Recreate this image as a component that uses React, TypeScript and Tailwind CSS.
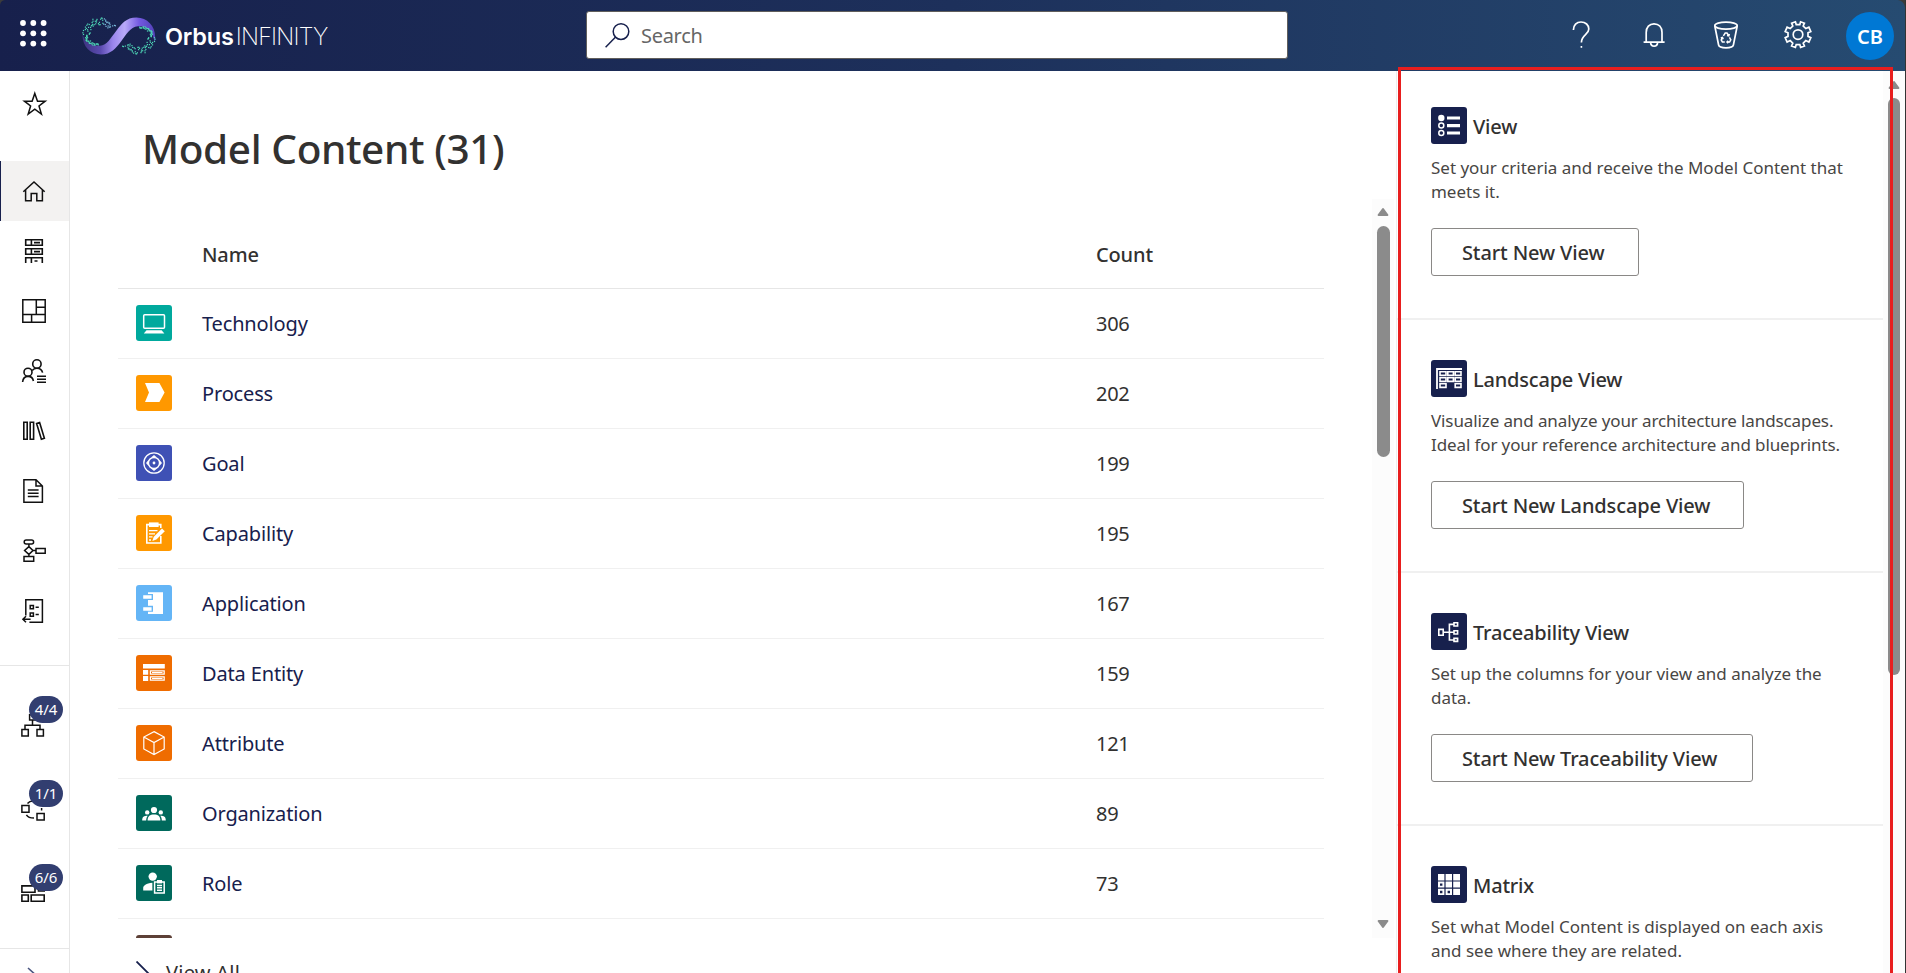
import React from 'react';

const FONT = "font-['Noto_Sans','Open_Sans',sans-serif]";

function LauncherIcon() {
  const at = [3, 13.3, 23.6];
  return (
    <svg width="27" height="27" viewBox="0 0 27 27" fill="#fff">
      {at.map((y) => at.map((x) => <circle key={`${x}-${y}`} cx={x} cy={y} r="2.9" />))}
    </svg>
  );
}

function noise(n: number) {
  const v = Math.sin(n * 127.1 + 11.7) * 43758.5453;
  return v - Math.floor(v);
}

function Logo() {
  const dots: { x: number; y: number; c: string }[] = [];
  for (let i = 0; i < 90; i++) {
    const t = Math.PI * (0.55 + (i / 90) * 1.28);
    const low = Math.sin(t) > 0;
    const r = low ? 14.5 - noise(i * 3 + 1) * 3 : 18 - noise(i * 3 + 1) * 7.5;
    const x = 18.5 + Math.cos(t) * (low ? r + 1.5 : r);
    const y = 18.5 + Math.sin(t) * (low ? r - 3 : r);
    dots.push({ x, y, c: x > 21 ? '#7cc0e0' : '#4fd8b8' });
    dots.push({ x: 74 - x, y: 38 - y, c: '#4fd8b8' });
  }
  return (
    <svg width="74" height="38" viewBox="0 0 74 38">
      <defs>
        <linearGradient id="ribbon" x1="0" y1="0" x2="1" y2="0">
          <stop offset="0" stopColor="#3c3480" />
          <stop offset="0.25" stopColor="#5b4bb0" />
          <stop offset="0.42" stopColor="#9a86ec" />
          <stop offset="0.58" stopColor="#b9aaf8" />
          <stop offset="0.78" stopColor="#7359e0" />
          <stop offset="1" stopColor="#5240b8" />
        </linearGradient>
      </defs>
      <path
        d="M0.5 17 C0 29 8 37.5 19 37.5 C29 37.5 34 31 39 24.5 C44 18 48 10 56 9.2 C65 8.4 71 15 72.6 25 C75.5 12 67 0.5 54.5 0.5 C44 0.5 39.5 7 34.5 13.5 C29 20.5 25 28.6 18 28.8 C9 29 2.5 25 0.5 17 Z"
        fill="url(#ribbon)"
      />
      {dots.map((d, i) => (
        <rect key={i} x={d.x - 0.6} y={d.y - 0.6} width="1.2" height="1.2" fill={d.c} />
      ))}
    </svg>
  );
}

const railSvg = {
  width: 24,
  height: 24,
  viewBox: '0 0 24 24',
  fill: 'none',
  stroke: '#111',
  strokeWidth: 1.5,
  className: 'block overflow-visible',
};

const StarIcon = () => (
  <svg {...railSvg} strokeWidth={1.5}>
    <path d="M12.8 1.4 L15.5 9.2 H23.2 L17 14 L19.4 22 L12.8 17.2 L6.2 22 L8.6 14 L2.4 9.2 H10.1 Z" />
  </svg>
);
const HomeIcon = () => (
  <svg {...railSvg}>
    <path d="M1.3 12.8 L12 2.9 L22.7 12.8 M3.6 11 V21.7 H9.2 V14.6 H14.8 V21.7 H20.4 V11" />
  </svg>
);
const RackIcon = () => (
  <svg {...railSvg} strokeWidth={1.6}>
    <path d="M3.7 0.8 H20.3 V6.2 H3.7 Z M9.4 0.8 V6.2 M3.7 9.8 H20.3 V15.2 H3.7 Z M9.4 9.8 V15.2 M3.7 24 V18.8 H20.3 V24 M9.4 18.8 V24 M12 3.6 H18 M12 12.6 H18 M12.5 22 H15.5" />
  </svg>
);
const LayoutIcon = () => (
  <svg {...railSvg}>
    <path d="M0.8 0.8 H23.2 V23.2 H0.8 Z M14.3 0.8 V15.4 M0.8 15.4 H23.2 M14.3 8.2 H23.2 M9.6 15.4 V23.2" />
  </svg>
);
const PeopleIcon = () => (
  <svg {...railSvg} strokeWidth={1.6}>
    <circle cx="14.9" cy="5" r="4.2" />
    <circle cx="6" cy="13.2" r="4" />
    <path d="M0.6 23 C1 19.5 3 17.4 6 17.4 C9 17.4 11 19.5 11.4 22 M10.2 11.4 C11.4 9.8 13 9.2 14.9 9.2 C18 9.2 20 11.2 20.6 13.6" />
    <path d="M15 17.2 H24 M15 20.2 H24 M15 23.2 H24" />
  </svg>
);
const BooksIcon = () => (
  <svg {...railSvg} strokeWidth={1.6}>
    <path d="M1.8 3.3 H5.2 V20.3 H1.8 Z M8.2 3.3 H11.6 V20.3 H8.2 Z M14.6 4.4 L17.6 3.4 L22.4 19.3 L19.4 20.3 Z" />
  </svg>
);
const DocIcon = () => (
  <svg {...railSvg}>
    <path d="M1.9 0.8 H14 L20.4 7 V23.2 H1.9 Z M14 0.8 V7 H20.4 M5.8 11 H16.6 M5.8 14.2 H16.6 M5.8 17.6 H16.6" />
  </svg>
);
const FlowIcon = () => (
  <svg {...railSvg}>
    <rect x="2.2" y="1" width="9.4" height="4" rx="2" />
    <path d="M6.9 5 V7.6 L11 11.5 L6.9 15.4 L2.6 11.5 L6.9 7.6 M6.9 15.4 V17.6 M11 11.5 H14" />
    <path d="M2 17.6 H11.7 V22.2 H2 Z M14 9.4 H23.2 V14.2 H14 Z" />
  </svg>
);
const ReportIcon = () => (
  <svg {...railSvg}>
    <path d="M3.8 16.5 V0.8 H20.4 V23.2 H7.4" />
    <path d="M8.2 6.6 H11.4 V9.8 H8.2 Z M8.2 14 H11.4 V17.2 H8.2 Z M13.6 8.2 H16.8 M13.6 15.6 H16.8" />
    <path d="M8.6 20.2 H1 M4 17.2 L0.9 20.2 L4 23.2" />
  </svg>
);

const TreeIcon = () => (
  <svg {...railSvg}>
    <path d="M8.6 0.8 H14.4 V6 H8.6 Z M11.5 6 V11.2 M4 15.2 V11.2 H19 V15.2 M0.9 15.4 H7.3 V21.9 H0.9 Z M16 15.4 H22.4 V21.9 H16 Z" />
  </svg>
);
const CycleIcon = () => (
  <svg {...railSvg}>
    <path d="M0.9 7.6 H8 V14.2 H0.9 Z M16 15.4 H23.2 V21.9 H16 Z M5.4 16.8 C6.6 18.8 9 20 13 20 M6.5 5.4 C8 3.6 10 3 12 3 M20.6 10 V12.6" />
  </svg>
);
const BlocksIcon = () => (
  <svg {...railSvg} strokeWidth={1.6}>
    <path d="M0.9 3.9 H14 V10.2 H0.9 Z M17.5 3.9 H23.2 V9 H17.5 Z M0.9 13 H7.3 V19.2 H0.9 Z M10.2 13 H23.2 V19.2 H10.2 Z" />
  </svg>
);

const railItems = [HomeIcon, RackIcon, LayoutIcon, PeopleIcon, BooksIcon, DocIcon, FlowIcon, ReportIcon];
const counters = [
  { Icon: TreeIcon, label: '4/4' },
  { Icon: CycleIcon, label: '1/1' },
  { Icon: BlocksIcon, label: '6/6' },
];

function Rail() {
  return (
    <nav className="flex h-full w-[70px] shrink-0 flex-col overflow-hidden border-r border-[#e6e6e6] bg-white">
      <div className="flex h-[60px] shrink-0 items-center pt-[6px] pl-[22px]">
        <StarIcon />
      </div>
      <div className="mt-[30px] flex shrink-0 flex-col">
        {railItems.map((Icon, i) => (
          <div
            key={i}
            className={
              i === 0
                ? 'flex h-[60px] items-center border-l border-[#17204d] bg-[#f3f2f1] pl-[21px]'
                : 'flex h-[60px] items-center pl-[22px]'
            }
          >
            <Icon />
          </div>
        ))}
      </div>
      <div className="mt-[24px] h-[284px] shrink-0 border-y border-[#e6e6e6] pt-[18px]">
        {counters.map(({ Icon, label }) => (
          <div key={label} className="relative h-[84px] pt-[30px] pl-[21px]">
            <Icon />
            <span className="absolute top-[12px] left-[29px] flex h-[27px] w-[34px] items-center justify-center rounded-[14px] bg-[#323e70] text-[15px] leading-none text-white">
              {label}
            </span>
          </div>
        ))}
      </div>
      <svg width="14" height="22" viewBox="0 0 14 22" fill="none" stroke="#4a5580" strokeWidth="1.6" className="mt-[18px] ml-[27px] shrink-0">
        <path d="M1 1 L11 10 L1 19" />
      </svg>
    </nav>
  );
}

const hdr = { fill: 'none', stroke: '#fff', strokeWidth: 1.7, width: 28, height: 28, viewBox: '0 0 28 28' };

function Header() {
  return (
    <header className="flex h-[71px] shrink-0 items-center bg-linear-to-r from-[#17204c] via-[#1d305b] to-[#264b71]">
      <div className="mt-[-4px] ml-[20px]">
        <LauncherIcon />
      </div>
      <div className="ml-[35px] flex w-[504px] items-center">
        <Logo />
        <span className="mt-[2px] ml-[9px] font-['Inter'] text-[23.5px] leading-none font-semibold tracking-[-0.2px] text-white">
          Orbus
        </span>
        <span className="mt-[2px] ml-[2px] font-['Inter'] text-[23.5px] leading-none font-extralight tracking-[-0.8px] text-white">
          INFINITY
        </span>
      </div>
      <div className="-mt-px flex h-[48px] w-[702px] items-center rounded-[3px] border border-[#605e5c] bg-white pl-[18px]">
        <svg width="25" height="25" viewBox="0 0 25 25" fill="none" stroke="#17204d" strokeWidth="1.5">
          <circle cx="16" cy="8.6" r="7.8" />
          <path d="M10.6 14 L0.6 24.2" />
        </svg>
        <span className="mt-[2px] ml-[11px] text-[20px] leading-none tracking-[-0.3px] text-[#666]">Search</span>
      </div>
      <div className="mt-[-2px] ml-[280px] flex items-center gap-[44px]">
        <svg {...hdr}>
          <path d="M5.4 9 C5.4 4 8.6 1 13 1 C17.6 1 20.8 4 20.8 8 C20.8 14 13.6 13.6 13.4 21.5" />
          <rect x="12.6" y="25" width="1.6" height="1.8" fill="#fff" stroke="none" />
        </svg>
        <svg {...hdr}>
          <path d="M3.6 21.2 H24.6 M6.2 21 V11.4 C6.2 6 9.4 2.8 14 2.8 C18.8 2.8 22 6 22 11.4 V21 M10.6 21.6 C11 26.4 17.2 26.4 17.6 21.6" />
        </svg>
        <svg {...hdr} className="overflow-visible">
          <ellipse cx="14" cy="4.6" rx="11.2" ry="3.5" />
          <path d="M2.8 5 L6.6 24 C7 26 9 26.8 14 26.8 C19 26.8 21 26 21.4 24 L25.2 5" />
          <path d="M11.4 14.8 L13.2 12 H15 L16.6 14.6 M17.4 16.4 L18.8 18.8 L17.6 21 H15 M12.8 21 H10.4 L9.2 19 L10.4 16.6 M15 14.4 L16.8 14.8 L17.4 13 M16.2 19.8 L15 21 L16.2 22.2 M8.8 17 L10.5 16.4 L11.2 18.2" strokeWidth="1.5" />
        </svg>
        <svg {...hdr} className="overflow-visible">
          <circle cx="14" cy="13.6" r="4.8" />
          <path d="M11.4 0.8 L12.2 3.6 H15.8 L16.6 0.8 L20.4 2.2 L19.2 5 L21.8 7.6 L24.9 6.2 L26.8 10.6 L24 11.8 V15.4 L26.8 16.6 L24.9 21 L21.8 19.6 L19.2 22.2 L20.4 25 L16.6 26.4 L15.8 23.6 H12.2 L11.4 26.4 L7.6 25 L8.8 22.2 L6.2 19.6 L3.1 21 L1.2 16.6 L4 15.4 V11.8 L1.2 10.6 L3.1 6.2 L6.2 7.6 L8.8 5 L7.6 2.2 Z" />
        </svg>
      </div>
      <div className="ml-[34px] flex size-[48px] items-center justify-center rounded-full bg-[#0078d4] pt-[2px] text-[20px] leading-none font-semibold text-white">
        CB
      </div>
    </header>
  );
}

const tile = { width: 36, height: 36, viewBox: '0 0 36 36', fill: 'none', stroke: '#fff', strokeWidth: 1.3 };

const rows: { name: string; count: number; bg: string; icon: React.ReactNode }[] = [
  {
    name: 'Technology', count: 306, bg: 'bg-[#00a99d]',
    icon: (<>
      <rect x="7.7" y="9.8" width="20.8" height="13.4" rx="1" strokeWidth="1.5" />
      <path d="M10.5 25.2 H25.6 L28.4 28.4 H7.8 Z" fill="#fff" stroke="none" />
    </>),
  },
  {
    name: 'Process', count: 202, bg: 'bg-[#ff9800]',
    icon: <path d="M9 8 H23.4 L28.6 17.4 L23.4 27 H9 L13 17.4 Z" fill="#fff" stroke="none" />,
  },
  {
    name: 'Goal', count: 199, bg: 'bg-[#3f51b5]',
    icon: (<>
      <circle cx="18" cy="18" r="10.2" />
      <circle cx="18" cy="18" r="5.6" strokeWidth="1.5" />
      <circle cx="18" cy="18" r="1.4" fill="#fff" stroke="none" />
      <path d="M18 10 L21 12.6 H15 Z M18 26 L15 23.4 H21 Z M10 18 L12.6 15 V21 Z M26 18 L23.4 21 V15 Z" fill="#fff" stroke="none" />
    </>),
  },
  {
    name: 'Capability', count: 195, bg: 'bg-[#ff9800]',
    icon: (<>
      <path d="M24.8 21 V28 H10.8 V9.6 H24.8 V13" strokeWidth="1.6" />
      <path d="M13 7.4 H22.6 V12 H13 Z" fill="#fff" stroke="none" />
      <path d="M13 15.6 H21.5 M13 18.8 H19 M13 21.8 H16.5 M13 25 H15" />
      <path d="M16.4 26 L17.6 22 L26 13.6 L28.8 16.2 L20.4 24.6 Z" fill="#fff" stroke="none" />
    </>),
  },
  {
    name: 'Application', count: 167, bg: 'bg-[#64b5f6]',
    icon: (<>
      <path d="M12 7.2 H27 V29 H12 V26.8 H17 V20.8 H12 V15 H17 V9 H12 Z" fill="#fff" stroke="none" />
      <path d="M7.2 10.2 H15.6 V13.8 H7.2 Z M7.2 22.2 H15.6 V25.8 H7.2 Z" fill="#fff" stroke="none" />
    </>),
  },
  {
    name: 'Data Entity', count: 159, bg: 'bg-[#ef6c00]',
    icon: (<>
      <path d="M7 9 H28.8 V13.6 H7 Z M7 15 H12.2 V19.8 H7 Z M7 21 H12.2 V26 H7 Z" fill="#fff" stroke="none" />
      <path d="M14.4 15.8 H28.2 V19.2 H14.4 Z M14.4 21.8 H28.2 V25.2 H14.4 Z M16 17.5 H26.5 M16 23.5 H26.5" strokeWidth="1.2" />
    </>),
  },
  {
    name: 'Attribute', count: 121, bg: 'bg-[#ef6c00]',
    icon: <path d="M18 6.6 L28.2 12 V24 L18 29.6 L7.8 24 V12 Z M7.8 12 L18 17.6 L28.2 12 M18 17.6 V29.6" strokeWidth="1.2" />,
  },
  {
    name: 'Organization', count: 89, bg: 'bg-[#00695c]',
    icon: (
      <g fill="#fff" stroke="none">
        <circle cx="18" cy="15" r="3.1" />
        <circle cx="11.2" cy="17.4" r="2.2" />
        <circle cx="24.8" cy="17.4" r="2.2" />
        <path d="M11.6 25.6 C11.6 20.8 14 19.4 18 19.4 C22 19.4 24.4 20.8 24.4 25.6 Z M6.2 25.6 C6.2 21.8 7.8 20.8 11.8 20.8 C10.6 22.2 10.2 23.6 10.2 25.6 Z M29.8 25.6 C29.8 21.8 28.2 20.8 24.2 20.8 C25.4 22.2 25.8 23.6 25.8 25.6 Z" />
      </g>
    ),
  },
  {
    name: 'Role', count: 73, bg: 'bg-[#00695c]',
    icon: (<>
      <circle cx="16.7" cy="11.6" r="4.2" fill="#fff" stroke="none" />
      <path d="M7.2 25.6 V23 C7.2 20.6 10 18.4 16.4 17.8 V25.6 Z" fill="#fff" stroke="none" />
      <path d="M18.6 17 H28.2 V28 H18.6 Z M21 20.4 H26 M21 22.8 H26 M21 25.2 H26" strokeWidth="1.5" />
      <path d="M21 15 H26 V18.4 H21 Z" fill="#fff" stroke="none" />
    </>),
  },
];

function ScrollArrow({ down = false }: { down?: boolean }) {
  return (
    <svg width="12" height="10" viewBox="0 0 12 10" className="block shrink-0" fill="#8b8b8b" stroke="#8b8b8b" strokeWidth="2" strokeLinejoin="round">
      <path d={down ? 'M6 8 L1.6 2 H10.4 Z' : 'M6 2 L10.4 8 H1.6 Z'} />
    </svg>
  );
}

function ModelContent() {
  return (
    <main className="flex min-w-0 flex-1 flex-col overflow-hidden bg-white">
      <h1 className="h-[128px] shrink-0 pt-[50px] pl-[72px] text-[40.5px] leading-[56px] font-[550] tracking-[-0.4px] text-[#323130]">
        Model Content (31)
      </h1>
      <div className="flex h-[739px] shrink-0 justify-between">
        <div className="ml-[48px] w-[1206px] overflow-hidden">
          <div className="flex h-[90px] items-center border-b border-[#e6e6e6] pt-[23px] text-[20px] leading-none font-[550] tracking-[-0.15px] text-[#323130]">
            <span className="ml-[84px] w-[894px]">Name</span>
            <span>Count</span>
          </div>
          {rows.map((r) => (
            <div key={r.name} className="flex h-[70px] items-center border-b border-[#f0f0f0] text-[20px] leading-none">
              <span className={`-mt-px ml-[18px] size-[36px] rounded-[3px] ${r.bg}`}>
                <svg {...tile}>{r.icon}</svg>
              </span>
              <span className="ml-[30px] w-[894px] tracking-[-0.15px] text-[#17204d]">{r.name}</span>
              <span className="tracking-[-0.3px] text-[#323130]">{r.count}</span>
            </div>
          ))}
          <div className="mt-[16px] ml-[18px] size-[36px] rounded-[3px] bg-[#5d4037]" />
        </div>
        <div className="mr-[2px] flex w-[22px] flex-col items-center bg-[#fcfcfc] pt-[8px]">
          <ScrollArrow />
          <div className="mt-[9px] h-[231px] w-[13px] rounded-full bg-[#8b8b8b]" />
          <div className="mt-auto mb-[9px]">
            <ScrollArrow down />
          </div>
        </div>
      </div>
      <div className="ml-[66px] flex h-[60px] shrink-0 pt-[23px]">
        <svg width="14" height="24" viewBox="0 0 14 24" fill="none" stroke="#17204d" strokeWidth="1.8">
          <path d="M0.5 0.5 L12 12 L0.5 23.5" />
        </svg>
        <span className="ml-[16px] text-[20px] leading-[24px] tracking-[0.25px] text-[#323130]">View All</span>
      </div>
    </main>
  );
}

const cards: { title: string; lines: [string, string]; button?: string; width?: string; tracking: string; icon: React.ReactNode }[] = [
  {
    title: 'View',
    lines: ['Set your criteria and receive the Model Content that', 'meets it.'],
    button: 'Start New View',
    width: 'w-[208px]',
    tracking: 'tracking-[-0.02px]',
    icon: (<>
      <circle cx="10.3" cy="11" r="3.2" fill="#fff" stroke="none" />
      <circle cx="10.3" cy="18.6" r="2.5" strokeWidth="1.5" />
      <circle cx="10.3" cy="26" r="2.5" strokeWidth="1.5" />
      <path d="M16 11 H29 M16 18.6 H29 M16 26 H29" strokeWidth="3.2" />
    </>),
  },
  {
    title: 'Landscape View',
    lines: ['Visualize and analyze your architecture landscapes.', 'Ideal for your reference architecture and blueprints.'],
    button: 'Start New Landscape View',
    width: 'w-[313px]',
    tracking: 'tracking-[-0.11px]',
    icon: (<>
      <path d="M6 29 V9 H31" strokeWidth="1.8" />
      <path d="M9 11.8 H15 V15.4 H9 Z M16.8 11.8 H22.4 V15.4 H16.8 Z M24.2 11.8 H30 V15.4 H24.2 Z M9 17.8 H15 V21.4 H9 Z M16.8 17.8 H22.4 V21.4 H16.8 Z M24.2 17.8 H30 V21.4 H24.2 Z M9 23.8 H15 V27.4 H9 Z M24.2 23.8 H30 V27.4 H24.2 Z" strokeWidth="1.6" />
    </>),
  },
  {
    title: 'Traceability View',
    lines: ['Set up the columns for your view and analyze the', 'data.'],
    button: 'Start New Traceability View',
    width: 'w-[322px]',
    tracking: 'tracking-[-0.03px]',
    icon: (
      <path d="M7.8 16.4 H12.2 V22.2 H7.8 Z M12.2 19.3 H22.6 M22.6 11.4 H18.4 V27 H22.6 M23 9.8 H26.6 V13 H23 Z M23 17.8 H26.6 V21 H23 Z M23 25.4 H26.6 V28.4 H23 Z" strokeWidth="1.6" />
    ),
  },
  {
    title: 'Matrix',
    lines: ['Set what Model Content is displayed on each axis', 'and see where they are related.'],
    tracking: 'tracking-[0px]',
    icon: (<>
      <path d="M7 8 H13.4 V14.4 H7 Z M14.6 8 H21 V14.4 H14.6 Z M22.2 8 H29 V14.4 H22.2 Z M7 15.6 H13.4 V21.6 H7 Z M14.6 15.6 H21 V21.6 H14.6 Z M22.2 15.6 H29 V21.6 H22.2 Z M7 22.8 H13.4 V29 H7 Z M14.6 22.8 H21 V29 H14.6 Z M22.2 22.8 H29 V29 H22.2 Z" fill="#fff" stroke="none" />
      <path d="M9 17.4 H11.4 V19.8 H9 Z M9 24.8 H11.4 V27.2 H9 Z M16.6 24.8 H19 V27.2 H16.6 Z" fill="#17204d" stroke="none" />
    </>),
  },
];

function SidePanel() {
  return (
    <aside className="flex h-full w-[509px] shrink-0 overflow-hidden border-l border-[#ececec] bg-white">
      <div className="w-[486px] shrink-0">
        {cards.map((c, i) => (
          <section
            key={c.title}
            className={
              i === 0
                ? 'h-[249px] border-b-2 border-[#f0f0f0] pt-[36px] pl-[34px]'
                : 'h-[253px] border-b-2 border-[#f0f0f0] pt-[40px] pl-[34px]'
            }
          >
            <div className="flex h-[37px] items-center">
              <span className="h-[37px] w-[36px] rounded-[3px] bg-[#17204d]">
                <svg {...tile} height={37} viewBox="0 0 36 37">{c.icon}</svg>
              </span>
              <h2 className="mt-[2px] ml-[6px] text-[20px] leading-none font-[550] tracking-[-0.2px] text-[#323130]">
                {c.title}
              </h2>
            </div>
            <p className={`mt-[12px] text-[17px] leading-[24px] whitespace-nowrap text-[#484644] ${c.tracking}`}>
              {c.lines[0]}
              <br />
              {c.lines[1]}
            </p>
            {c.button && (
              <button
                className={`mt-[24px] flex h-[48px] items-center rounded-[3px] border border-[#8a8886] bg-white pt-[2px] pl-[30px] text-[20px] leading-none font-[550] tracking-[-0.13px] whitespace-nowrap text-[#323130] ${c.width}`}
              >
                {c.button}
              </button>
            )}
          </section>
        ))}
      </div>
      <div className="flex w-[22px] flex-col items-center bg-[#fcfcfc] pt-[9px]">
        <ScrollArrow />
        <div className="mt-[8px] h-[577px] w-[12px] rounded-full bg-[#8b8b8b]" />
      </div>
    </aside>
  );
}

export default function App() {
  return (
    <div className={`relative flex h-[973px] w-[1906px] flex-col overflow-hidden border-r border-[#333] bg-white ${FONT}`}>
      <Header />
      <div className="flex min-h-0 flex-1">
        <Rail />
        <ModelContent />
        <SidePanel />
      </div>
      <div className="pointer-events-none absolute top-[67px] left-[1398px] h-[920px] w-[495px] border-[3px] border-[#e81e1e]" />
      <svg className="absolute top-0 left-0" width="5" height="5" viewBox="0 0 5 5">
        <path d="M0 0 H5 C2 0.5 0.5 2 0 5 Z" fill="#3b3b3b" />
      </svg>
      <svg className="absolute top-0 right-0" width="7" height="7" viewBox="0 0 7 7">
        <path d="M7 0 H0 C4 0.8 6.2 3 7 7 Z" fill="#3b3b3b" />
      </svg>
    </div>
  );
}
